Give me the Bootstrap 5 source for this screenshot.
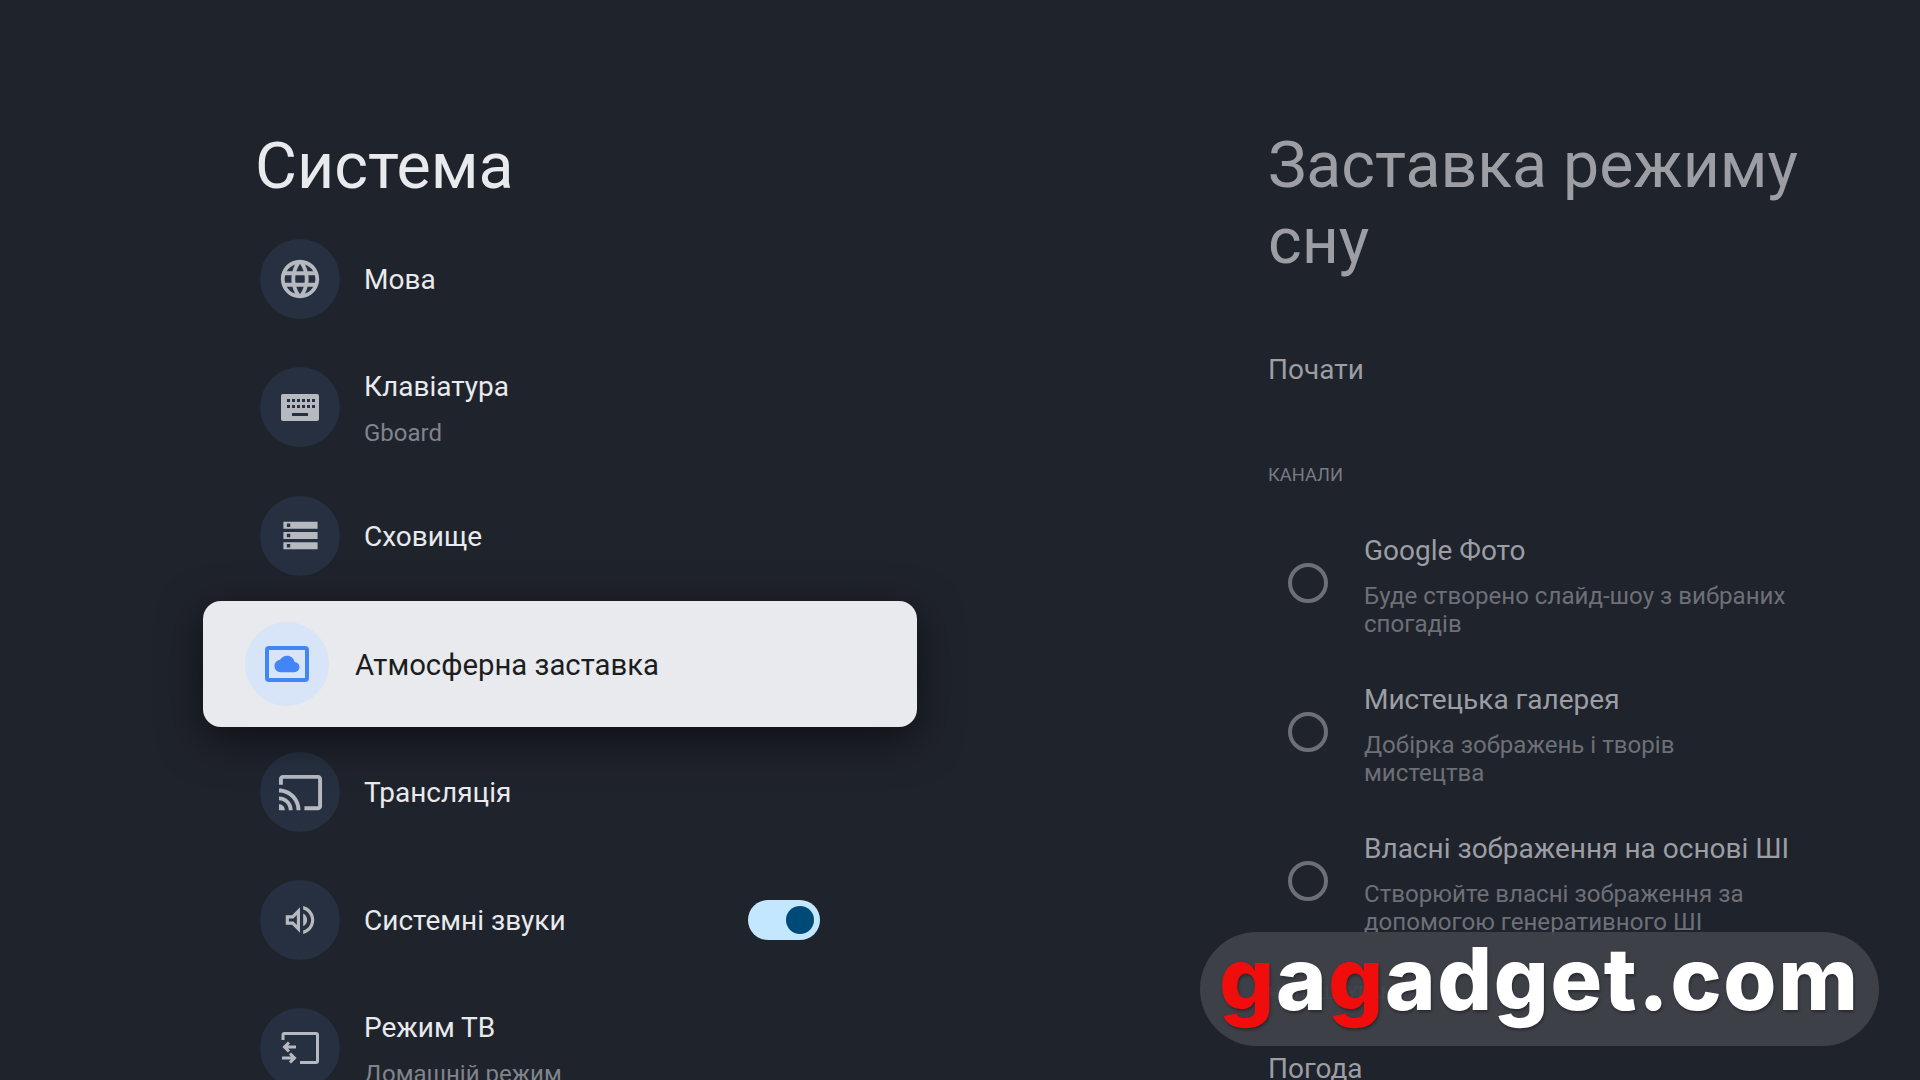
<!DOCTYPE html>
<html lang="uk">
<head>
  <meta charset="UTF-8" />
  <title>Система</title>
  <meta name="viewport" content="width=device-width, initial-scale=1" />
  <link href="https://cdn.jsdelivr.net/npm/bootstrap@5.3.0/dist/css/bootstrap.min.css" rel="stylesheet" />
  <style>
    html, body {
      height: 1080px;
      margin: 0;
      overflow: hidden;
      background-color: #1f232c;
      font-family: Roboto, "Liberation Sans", sans-serif;
    }

    /* Left menu */
    .menu-col {
      width: 1268px;
      flex: none;
      padding: 128px 0 0 255px;
    }

    .screen-title {
      font-size: 64.5px;
      font-weight: 400;
      line-height: 76px;
      margin: 0;
      color: #e8eaed;
    }

    .menu-list {
      width: 560px;
      margin: 11px 0 0 5px;
    }

    .menu-row {
      height: 128.33px;
      color: #e8eaed;
      font-size: 28px;
      gap: 24px;
    }

    .sound-row {
      margin-top: -1px;
    }

    .menu-icon {
      width: 80px;
      height: 80px;
      flex: none;
      background-color: #263040;
      color: #b6bac0;
    }

    .menu-stack {
      padding-top: 3px;
    }

    .menu-sub {
      font-size: 24px;
      line-height: 32px;
      margin-top: 13px;
      color: #80848b;
    }

    .menu-label {
      line-height: 34px;
      padding-top: 2px;
    }

    /* Focused row */
    .focus-card {
      position: relative;
      z-index: 2;
      width: 714px;
      height: 126px;
      margin-left: -57px;
      padding-left: 42px;
      gap: 26px;
      flex: none;
      background-color: #e8eaed;
      border-radius: 18px;
      color: #1c1d20;
      font-size: 29.3px;
      box-shadow: 0 12px 44px rgba(0, 0, 0, .55);
    }

    .focus-text {
      padding-top: 4px;
    }

    .focus-icon {
      width: 84px;
      height: 84px;
      flex: none;
      background-color: #d8e4f8;
    }

    .sound-switch {
      width: 72px;
      height: 40px;
      padding-right: 6px;
      background-color: #c2e7ff;
    }

    .sound-knob {
      width: 28px;
      height: 28px;
      background-color: #004a77;
    }

    /* Right panel */
    .detail-col {
      width: 600px;
      flex: none;
      padding-top: 127px;
      color: #9c9ea3;
    }

    .detail-title {
      font-size: 64.4px;
      font-weight: 400;
      line-height: 76px;
      margin: 0;
      color: #9c9ea3;
    }

    .detail-line {
      font-size: 28px;
      line-height: 36px;
    }

    .detail-head {
      font-size: 18.3px;
      line-height: 24px;
      color: #797c82;
    }

    .start-line {
      margin-top: 73px;
    }

    .channels-head {
      margin-top: 75px;
      padding-bottom: 2px;
    }

    .settings-head {
      margin-top: 45px;
    }

    .weather-line {
      margin-top: 46px;
    }

    .choice-row {
      gap: 36px;
      margin-top: 44px;
      padding-left: 20px;
    }

    .choice-radio {
      width: 40px;
      height: 40px;
      flex: none;
      margin-bottom: 5px;
      border: 4px solid #6c6f75;
    }

    .choice-sub {
      width: 425px;
      margin-top: 13px;
      font-size: 24.1px;
      line-height: 28px;
      color: #6d7076;
    }

    /* Site watermark, sits over the panel */
    .site-mark {
      position: absolute;
      top: 932px;
      left: 1200px;
      width: 679px;
      height: 114px;
      padding-bottom: 20px;
      z-index: 5;
      background-color: rgba(64, 67, 73, .93);
      color: #fff;
      font-family: Inter, "Liberation Sans", sans-serif;
      font-size: 86px;
      font-weight: 800;
      line-height: 1;
      letter-spacing: 1.7px;
      text-shadow: 1px 2px 3px rgba(0, 0, 0, .35);
    }

    .site-mark b {
      color: #f20d0d;
      font-weight: 800;
    }
  </style>
</head>
<body>
  <div class="d-flex">

    <!-- Menu -->
    <div class="menu-col">
      <h1 class="screen-title">Система</h1>
      <div class="menu-list">
        <div class="menu-row d-flex align-items-center">
          <span class="menu-icon rounded-circle d-flex align-items-center justify-content-center">
            <svg width="46" height="46" viewBox="0 0 24 24" fill="currentColor"><path d="M11.99 2C6.47 2 2 6.48 2 12s4.47 10 9.99 10C17.52 22 22 17.52 22 12S17.52 2 11.99 2zm6.93 6h-2.95c-.32-1.25-.78-2.45-1.38-3.56 1.84.63 3.37 1.91 4.33 3.56zM12 4.04c.83 1.2 1.48 2.53 1.91 3.96h-3.82c.43-1.43 1.08-2.76 1.91-3.96zM4.26 14C4.1 13.36 4 12.69 4 12s.1-1.36.26-2h3.38c-.08.66-.14 1.32-.14 2 0 .68.06 1.34.14 2H4.26zm.82 2h2.95c.32 1.25.78 2.45 1.38 3.56-1.84-.63-3.37-1.9-4.33-3.56zm2.95-8H5.08c.96-1.66 2.49-2.93 4.33-3.56C8.81 5.55 8.35 6.75 8.03 8zM12 19.96c-.83-1.2-1.48-2.53-1.91-3.96h3.82c-.43 1.43-1.08 2.76-1.91 3.96zM14.34 14H9.66c-.09-.66-.16-1.32-.16-2 0-.68.07-1.35.16-2h4.68c.09.65.16 1.32.16 2 0 .68-.07 1.34-.16 2zm.25 5.56c.6-1.11 1.06-2.31 1.38-3.56h2.95c-.96 1.65-2.49 2.93-4.33 3.56zM16.36 14c.08-.66.14-1.32.14-2 0-.68-.06-1.34-.14-2h3.38c.16.64.26 1.31.26 2s-.1 1.36-.26 2h-3.38z"/></svg>
          </span>
          <div class="menu-label">Мова</div>
        </div>

        <div class="menu-row d-flex align-items-center">
          <span class="menu-icon rounded-circle d-flex align-items-center justify-content-center">
            <svg width="38" height="27" viewBox="0 0 38 27" fill="currentColor"><path fill-rule="evenodd" d="M2 0h34a2 2 0 0 1 2 2v23a2 2 0 0 1-2 2H2a2 2 0 0 1-2-2V2a2 2 0 0 1 2-2zM6 5v3h3V5zm5 0v3h3V5zm5 0v3h3V5zm5 0v3h3V5zm5 0v3h3V5zm5 0v3h3V5zM6 11v3h3v-3zm5 0v3h3v-3zm5 0v3h3v-3zm5 0v3h3v-3zm5 0v3h3v-3zm5 0v3h3v-3zM11 19v3h16v-3z"/></svg>
          </span>
          <div class="menu-stack">
            <div class="menu-label">Клавіатура</div>
            <div class="menu-sub">Gboard</div>
          </div>
        </div>

        <div class="menu-row d-flex align-items-center">
          <span class="menu-icon rounded-circle d-flex align-items-center justify-content-center">
            <svg width="41" height="41" viewBox="0 0 24 24" fill="currentColor"><path d="M2 20h20v-4H2v4zm2-3h2v2H4v-2zM2 4v4h20V4H2zm4 3H4V5h2v2zm-4 7h20v-4H2v4zm2-3h2v2H4v-2z"/></svg>
          </span>
          <div class="menu-label">Сховище</div>
        </div>

        <div class="menu-row d-flex align-items-center">
          <div class="focus-card d-flex align-items-center">
            <span class="focus-icon rounded-circle d-flex align-items-center justify-content-center">
              <svg width="44" height="36" viewBox="0 0 44 36"><rect x="2" y="2" width="40" height="32" rx="2" fill="none" stroke="#4285f4" stroke-width="4"/><path transform="translate(9.5 5.5) scale(1.04)" fill="#4285f4" d="M19.35 10.04C18.67 6.59 15.64 4 12 4 9.11 4 6.6 5.64 5.35 8.04 2.34 8.36 0 10.91 0 14c0 3.31 2.69 6 6 6h13c2.76 0 5-2.24 5-5 0-2.64-2.05-4.78-4.65-4.96z"/></svg>
            </span>
            <div class="focus-text">Атмосферна заставка</div>
          </div>
        </div>

        <div class="menu-row d-flex align-items-center">
          <span class="menu-icon rounded-circle d-flex align-items-center justify-content-center">
            <svg width="47" height="47" viewBox="0 0 24 24" fill="currentColor"><path d="M21 3H3c-1.1 0-2 .9-2 2v3h2V5h18v14h-7v2h7c1.1 0 2-.9 2-2V5c0-1.1-.9-2-2-2zM1 18v3h3c0-1.66-1.34-3-3-3zm0-4v2c2.76 0 5 2.24 5 5h2c0-3.87-3.13-7-7-7zm0-4v2c4.97 0 9 4.03 9 9h2c0-6.08-4.93-11-11-11z"/></svg>
          </span>
          <div class="menu-label">Трансляція</div>
        </div>

        <div class="menu-row sound-row d-flex align-items-center">
          <span class="menu-icon rounded-circle d-flex align-items-center justify-content-center">
            <svg width="38" height="38" viewBox="0 0 24 24" fill="currentColor"><path d="M3 9v6h4l5 5V4L7 9H3zm7-.17v6.34L7.83 13H5v-2h2.83L10 8.83zM16.5 12c0-1.77-1.02-3.29-2.5-4.03v8.05c1.48-.73 2.5-2.25 2.5-4.02zM14 3.23v2.06c2.89.86 5 3.54 5 6.71s-2.11 5.85-5 6.71v2.06c4.01-.91 7-4.49 7-8.77 0-4.28-2.99-7.86-7-8.77z"/></svg>
          </span>
          <div class="menu-label">Системні звуки</div>
          <span class="sound-switch rounded-pill d-flex align-items-center justify-content-end ms-auto">
            <span class="sound-knob rounded-circle"></span>
          </span>
        </div>

        <div class="menu-row d-flex align-items-center">
          <span class="menu-icon rounded-circle d-flex align-items-center justify-content-center">
            <svg width="38" height="32" viewBox="0 0 38 32" fill="none" stroke="currentColor" stroke-width="3"><path d="M2 8V3q0-1.500 1.500-1.500H35q1.500 0 1.500 1.500V29q0 1.500-1.500 1.500H19"/><path d="M15 15H4M8 10.500 3.500 15 8 19.500M1 26h12M9 21.500 13.500 26 9 30.500"/></svg>
          </span>
          <div class="menu-stack">
            <div class="menu-label">Режим ТВ</div>
            <div class="menu-sub">Домашній режим</div>
          </div>
        </div>
      </div>
    </div>

    <!-- Screensaver panel -->
    <div class="detail-col">
      <h2 class="detail-title">Заставка режиму сну</h2>
      <div class="detail-line start-line">Почати</div>
      <div class="detail-head channels-head text-uppercase">Канали</div>

      <div class="choice-row d-flex align-items-center">
        <span class="choice-radio rounded-circle"></span>
        <div>
          <div class="detail-line">Google Фото</div>
          <div class="choice-sub">Буде створено слайд-шоу з вибраних спогадів</div>
        </div>
      </div>
      <div class="choice-row d-flex align-items-center">
        <span class="choice-radio rounded-circle"></span>
        <div>
          <div class="detail-line">Мистецька галерея</div>
          <div class="choice-sub">Добірка зображень і творів мистецтва</div>
        </div>
      </div>
      <div class="choice-row d-flex align-items-center">
        <span class="choice-radio rounded-circle"></span>
        <div>
          <div class="detail-line">Власні зображення на основі ШІ</div>
          <div class="choice-sub">Створюйте власні зображення за допомогою генеративного ШІ</div>
        </div>
      </div>

      <div class="detail-head settings-head text-uppercase">Налаштування</div>
      <div class="detail-line weather-line">Погода</div>
    </div>
  </div>

  <div class="site-mark rounded-pill d-flex align-items-center justify-content-center"><div><b>g</b>a<b>g</b>adget.com</div></div>
</body>
</html>
